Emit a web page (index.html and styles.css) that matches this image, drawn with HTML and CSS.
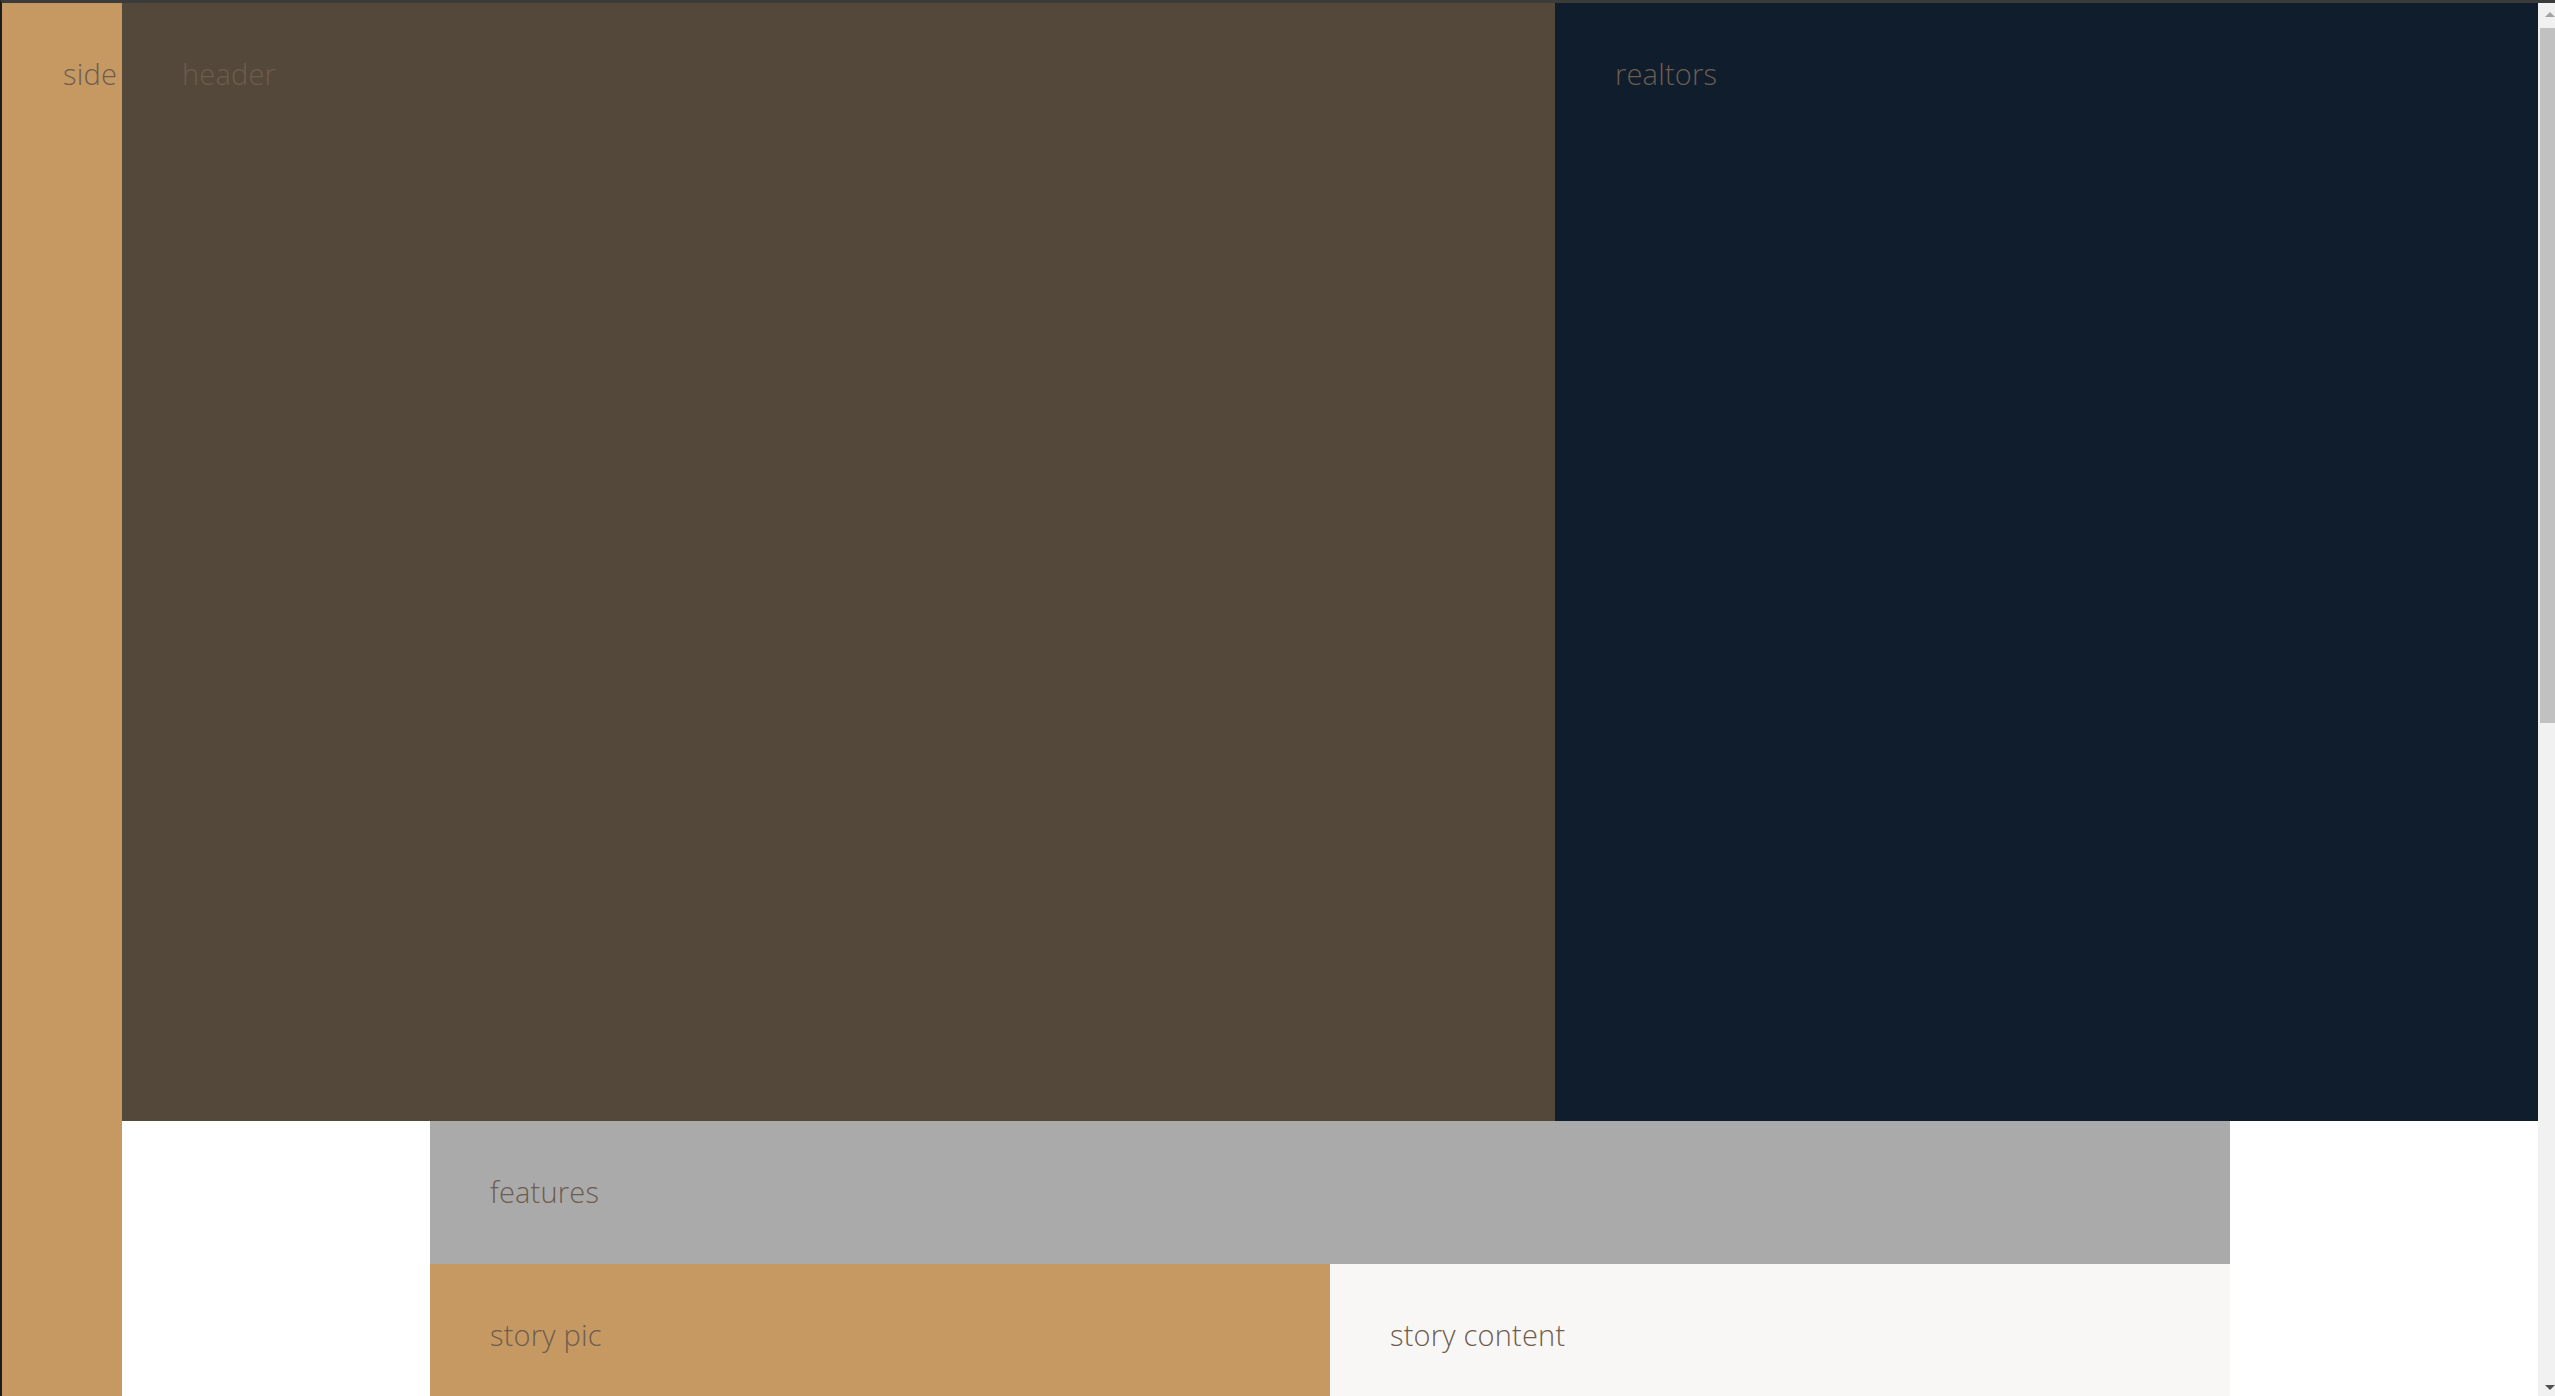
FILE: index.html
```html
<!DOCTYPE html>
<html lang="en">
<head>
<meta charset="utf-8">
<title>Nexter grid</title>
<link rel="stylesheet" href="styles.css">
</head>
<body>
<div class="viewport">
  <div class="container">
    <div class="sidebar">side</div>
    <header class="header">header</header>
    <div class="realtors">realtors</div>
    <section class="features">features</section>
    <div class="story-pictures">story pic</div>
    <div class="story-content">story content</div>
    <section class="homes">homes</section>
    <section class="gallery">gallery</section>
    <footer class="footer">footer</footer>
  </div>
</div>
<div class="scrollbar" aria-hidden="true">
  <div class="scroll-btn scroll-btn--up"><span class="arrow arrow--up"></span></div>
  <div class="scroll-track"><div class="scroll-thumb"></div></div>
  <div class="scroll-btn scroll-btn--down"><span class="arrow arrow--down"></span></div>
</div>
</body>
</html>
```

FILE: styles.css
```css
* { box-sizing: border-box; margin: 0; padding: 0; }

html, body { height: 100%; }

body {
  display: flex;
  border-top: 3px solid #3b3b3b;
  border-left: 2px solid #1c1c1c;
  overflow: hidden;
  background: #ffffff;
  font-family: "Open Sans", "Liberation Sans", sans-serif;
  font-weight: 300;
  color: #6d5d4f;
}

.viewport {
  flex: 1;
  height: 100%;
  overflow: hidden;
}

/* fake browser scrollbar */
.scrollbar {
  width: 17px;
  flex: none;
  display: flex;
  flex-direction: column;
  background: #f1f1f1;
}
.scroll-btn {
  height: 25px;
  flex: none;
  display: flex;
  justify-content: flex-end;
}
.scroll-btn--up { align-items: flex-start; padding-top: 9px; }
.scroll-btn--down { align-items: flex-start; padding-top: 14px; }
.arrow {
  width: 0;
  height: 0;
  border-left: 5px solid transparent;
  border-right: 5px solid transparent;
}
.arrow--up { border-bottom: 5px solid #a3a3a3; }
.arrow--down { border-top: 5px solid #505050; }
.scroll-track {
  flex: 1;
  padding-left: 2px;
}
.scroll-thumb {
  height: 695px;
  background: #c1c1c1;
}

.container {
  display: grid;
  grid-template-columns: 120px minmax(96px, 1fr) repeat(8, 225px) minmax(96px, 1fr);
  grid-template-rows: 1118px min-content 1003px repeat(3, min-content);
  font-size: 29px;
  letter-spacing: 0.2px;
  line-height: 47px;
}

.container > * {
  padding: 47px 60px 49px;
}

.sidebar {
  grid-column: 1 / 2;
  grid-row: 1 / -1;
  background: #c69963;
  padding: 47px 0 0 61px;
  white-space: nowrap;
  position: relative;
  z-index: 1;
}

.header {
  grid-column: 2 / 8;
  background: #54483a;
}

.realtors {
  grid-column: 8 / 12;
  background: #101d2c;
}

.features {
  grid-column: 3 / 11;
  background: #aaaaaa;
}

.story-pictures {
  grid-column: 3 / 7;
  background: #c69963;
}

.story-content {
  grid-column: 7 / 11;
  background: #f9f7f6;
}

.homes {
  grid-column: 3 / 11;
  background: #f9f7f6;
}

.gallery {
  grid-column: 2 / 12;
  background: #c69963;
}

.footer {
  grid-column: 2 / 12;
  background: #101d2c;
}
```
